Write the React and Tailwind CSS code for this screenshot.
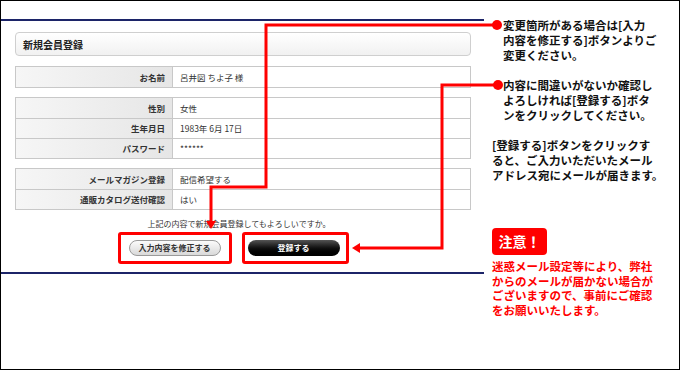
import React from 'react';

const jp = { fontFamily: '"Noto Sans CJK JP", "Noto Sans", sans-serif' };

function InfoTable({ rows }) {
  return (
    <div className="border border-[#c8c8c8] bg-white">
      {rows.map(([label, value], i) => (
        <div
          key={label}
          className={`grid grid-cols-[157px_1fr] h-[20px] ${i > 0 ? 'border-t border-[#c8c8c8]' : ''}`}
        >
          <div className="flex items-center justify-end pr-[7px] border-r border-[#c8c8c8] bg-gradient-to-r from-[#f6f6f6] to-[#e6e6e6] text-[8.5px] font-bold text-[#333]">
            {label}
          </div>
          <div className="flex items-center pl-[7px] text-[8.5px] text-[#333]">{value}</div>
        </div>
      ))}
    </div>
  );
}

function Connectors() {
  return (
    <svg className="absolute left-0 top-0 pointer-events-none" width="680" height="370">
      <g stroke="#ff0000" strokeWidth="3" fill="none">
        <path d="M496 24 H265 V186 H210 V221" />
        <path d="M497 84 H441 V247 H358" />
      </g>
      <g fill="#ff0000">
        <circle cx="496" cy="24" r="5" />
        <circle cx="497" cy="84" r="5" />
        <polygon points="205,220 215,220 210,228" />
        <polygon points="359,242 359,252 351,247" />
      </g>
    </svg>
  );
}

export default function App() {
  return (
    <div className="relative w-[680px] h-[370px] border border-black bg-white overflow-hidden" style={jp}>
      <div className="flex">
        {/* 左側 フォーム */}
        <div className="w-[483px] shrink-0">
          <div className="mt-[18px] h-[2px] bg-[#1c2468]"></div>
          <div className="pl-[14px] pr-[13px] pt-[11px] pb-[8px]">
            <div className="h-[24px] rounded-[4px] border border-[#cfcfcf] bg-gradient-to-b from-white to-[#f1f1f1] flex items-center pl-[7px] text-[10px] font-bold text-[#222]">
              新規会員登録
            </div>
            <div className="mt-[10px]">
              <InfoTable rows={[['お名前', '呂井図 ちよ子 様']]} />
            </div>
            <div className="mt-[9px]">
              <InfoTable
                rows={[
                  ['性別', '女性'],
                  ['生年月日', '1983年 6月 17日'],
                  ['パスワード', '******'],
                ]}
              />
            </div>
            <div className="mt-[9px]">
              <InfoTable
                rows={[
                  ['メールマガジン登録', '配信希望する'],
                  ['通販カタログ送付確認', 'はい'],
                ]}
              />
            </div>
            <p className="mt-[8px] text-center text-[8px] leading-[12px] text-[#333] pr-[8px]">
              上記の内容で新規会員登録してもよろしいですか。
            </p>
            <div className="mt-[2px] flex justify-center gap-[10px] pr-[20px]">
              <div className="border-[3px] border-[#ff0000] rounded-[3px] px-[8px] py-[5px]">
                <button className="w-[92px] h-[16px] rounded-full border border-[#9a9a9a] bg-gradient-to-b from-[#fbfbfb] to-[#d9d9d9] text-[8px] font-bold text-[#333] flex items-center justify-center">
                  入力内容を修正する
                </button>
              </div>
              <div className="border-[3px] border-[#ff0000] rounded-[3px] pl-[3px] pr-[6px] py-[5px]">
                <button className="w-[92px] h-[16px] rounded-full bg-gradient-to-b from-[#555] via-[#111] to-[#000] text-[8px] font-bold text-white flex items-center justify-center">
                  登録する
                </button>
              </div>
            </div>
          </div>
          <div className="h-[2px] bg-[#1c2468]"></div>
        </div>

        {/* 右側 説明 */}
        <div className="flex-1 pl-[8px] pt-[17px] text-[11.5px] font-bold leading-[15px] text-[#111]">
          <p className="pl-[11px] whitespace-nowrap">
            変更箇所がある場合は[入力
            <br />
            内容を修正する]ボタンよりご
            <br />
            変更ください。
          </p>
          <p className="pl-[11px] mt-[15px] whitespace-nowrap">
            内容に間違いがないか確認し
            <br />
            よろしければ[登録する]ボタ
            <br />
            ンをクリックしてください。
          </p>
          <p className="mt-[15px] whitespace-nowrap">
            [登録する]ボタンをクリックす
            <br />
            ると、ご入力いただいたメール
            <br />
            アドレス宛にメールが届きます。
          </p>
          <div className="mt-[45px] w-[55px] h-[27px] rounded-[4px] bg-[#ff0000] text-white text-[14px] flex items-center justify-center">
            注意！
          </div>
          <p className="mt-[4px] text-[#ff0000] text-[11.5px] leading-[14.5px] whitespace-nowrap">
            迷惑メール設定等により、弊社
            <br />
            からのメールが届かない場合が
            <br />
            ございますので、事前にご確認
            <br />
            をお願いいたします。
          </p>
        </div>
      </div>
      <Connectors />
    </div>
  );
}
